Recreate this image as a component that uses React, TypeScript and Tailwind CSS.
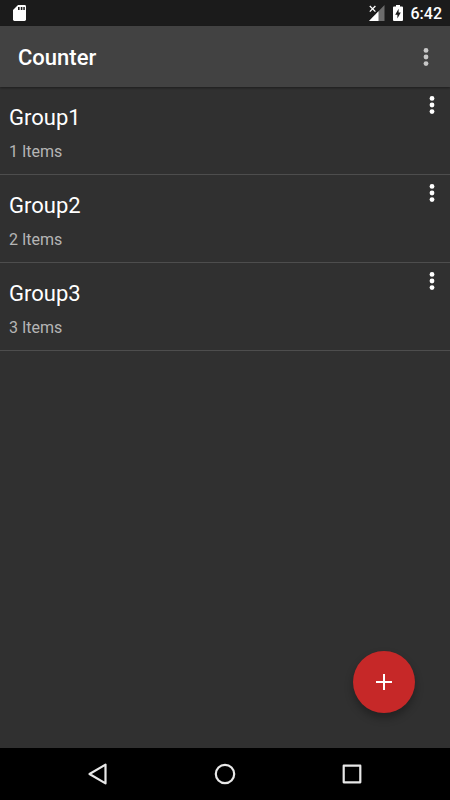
import React from 'react';

const groups = [
  { name: 'Group1', count: 1 },
  { name: 'Group2', count: 2 },
  { name: 'Group3', count: 3 },
];

function MoreIcon() {
  return (
    <svg width="6" height="20" viewBox="0 0 6 20" fill="currentColor" aria-hidden="true">
      <circle cx="3" cy="3.4" r="2.4" />
      <circle cx="3" cy="10" r="2.4" />
      <circle cx="3" cy="16.6" r="2.4" />
    </svg>
  );
}

function StatusBar() {
  return (
    <div className="flex h-[26px] items-center bg-[#1b1b1b] pr-2 pl-[13px] text-white">
      <svg width="13" height="16" viewBox="0 0 13 16" aria-hidden="true">
        <path d="M5 0H11.6Q13 0 13 1.4V14.6Q13 16 11.6 16H1.4Q0 16 0 14.6V5Z" fill="#fff" />
        <path d="M5 2h1.6v3H5zM7.8 2h1.6v3H7.8zM10.3 2h1.5v3h-1.5z" fill="#1b1b1b" />
      </svg>
      <div className="ml-auto flex items-center">
        <svg width="16" height="16" viewBox="0 0 16 16" aria-hidden="true">
          <path d="M15.5 0V16H0Z" fill="#6c6c6c" />
          <path d="M9.5 6.2V16H0Z" fill="#fff" />
          <path d="M0 0H7.5V7.5L6 9.5H0Z" fill="#1b1b1b" />
          <path d="M.8 1 6.4 6.6M6.4 1 .8 6.6" stroke="#fff" strokeWidth="1.3" />
        </svg>
        <svg className="ml-2" width="10" height="16" viewBox="0 0 10 16" aria-hidden="true">
          <path d="M3 0H7V1.5H9Q10 1.5 10 2.5V15Q10 16 9 16H1Q0 16 0 15V2.5Q0 1.5 1 1.5H3Z" fill="#fff" />
          <path d="M5.6 3.8V7.6H7.8L4.4 13.6V9.8H2.2Z" fill="#1b1b1b" />
        </svg>
        <span className="ml-2 pt-0.5 text-base leading-6 font-medium">6:42</span>
      </div>
    </div>
  );
}

export default function App() {
  return (
    <div className="flex min-h-screen flex-col bg-[#303030] font-['Roboto',sans-serif] text-white">
      <StatusBar />
      <header className="z-10 flex h-[61px] items-center justify-between bg-[#424242] pr-[21px] pl-[18px] shadow-[0_1px_2px_rgba(0,0,0,0.4)]">
        <h1 className="pt-0.5 text-[22px] leading-8 font-medium">Counter</h1>
        <button type="button" aria-label="More options" className="text-[#c8c8c8]">
          <MoreIcon />
        </button>
      </header>
      <main className="relative flex-1">
        <ul>
          {groups.map((group) => (
            <li key={group.name} className="flex h-[88px] items-start justify-between border-b border-[#4d4d4d] pr-[15px] pl-[9px]">
              <div className="pt-[15px]">
                <h2 className="text-[22px] leading-8">{group.name}</h2>
                <p className="mt-1.5 text-base leading-6 text-[#b5b5b5]">{group.count} Items</p>
              </div>
              <button type="button" aria-label={`Options for ${group.name}`} className="mt-2">
                <MoreIcon />
              </button>
            </li>
          ))}
        </ul>
        <button
          type="button"
          aria-label="Add group"
          className="absolute right-[35px] bottom-[35px] flex size-[62px] items-center justify-center rounded-full bg-[#c62828] shadow-[0_5px_9px_rgba(0,0,0,0.3)]"
        >
          <svg width="16" height="16" viewBox="0 0 16 16" stroke="#fff" strokeWidth="2" aria-hidden="true">
            <path d="M8 0V16M0 8H16" />
          </svg>
        </button>
      </main>
      <nav className="flex h-[52px] items-center justify-center gap-[105px] bg-black text-[#e8e8e8]">
        <button type="button" aria-label="Back">
          <svg width="22" height="22" viewBox="0 0 22 22" fill="none" stroke="currentColor" strokeWidth="2.2" strokeLinejoin="round" aria-hidden="true">
            <path d="M18.5 1.6V20.4L2.5 11Z" />
          </svg>
        </button>
        <button type="button" aria-label="Home">
          <svg width="22" height="22" viewBox="0 0 22 22" fill="none" stroke="currentColor" strokeWidth="2.2" aria-hidden="true">
            <circle cx="11" cy="11" r="9.2" />
          </svg>
        </button>
        <button type="button" aria-label="Recent apps">
          <svg width="22" height="22" viewBox="0 0 22 22" fill="none" stroke="currentColor" strokeWidth="2.2" strokeLinejoin="round" aria-hidden="true">
            <rect x="2.7" y="2.7" width="16.6" height="16.6" />
          </svg>
        </button>
      </nav>
    </div>
  );
}
